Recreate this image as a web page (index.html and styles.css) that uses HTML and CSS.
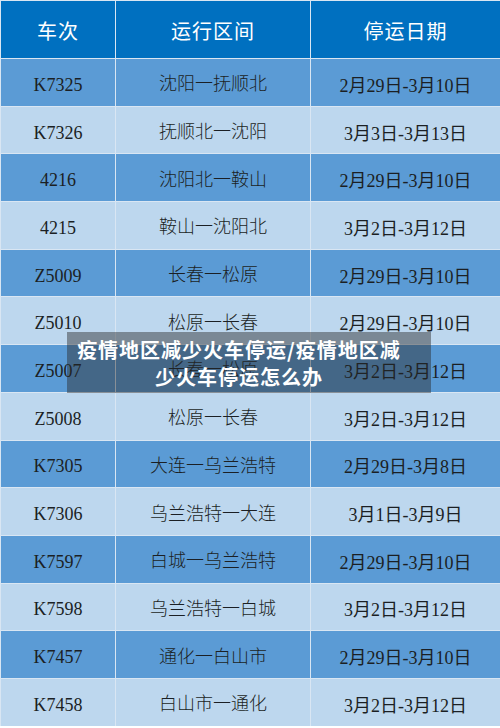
FILE: index.html
```html
<!DOCTYPE html>
<html lang="zh-CN">
<head>
<meta charset="utf-8">
<title>疫情地区减少火车停运</title>
<link rel="stylesheet" href="styles.css">
</head>
<body>
<div class="page">
  <div class="table">
    <div class="cell head">车次</div>
    <div class="cell head">运行区间</div>
    <div class="cell head">停运日期</div>

    <div class="cell dark num">K7325</div><div class="cell dark route">沈阳一抚顺北</div><div class="cell dark">2月29日-3月10日</div>
    <div class="cell light num">K7326</div><div class="cell light route">抚顺北一沈阳</div><div class="cell light">3月3日-3月13日</div>
    <div class="cell dark num">4216</div><div class="cell dark route">沈阳北一鞍山</div><div class="cell dark">2月29日-3月10日</div>
    <div class="cell light num">4215</div><div class="cell light route">鞍山一沈阳北</div><div class="cell light">3月2日-3月12日</div>
    <div class="cell dark num">Z5009</div><div class="cell dark route">长春一松原</div><div class="cell dark">2月29日-3月10日</div>
    <div class="cell light num">Z5010</div><div class="cell light route">松原一长春</div><div class="cell light">2月29日-3月10日</div>
    <div class="cell dark num">Z5007</div><div class="cell dark route">长春一松原</div><div class="cell dark">3月2日-3月12日</div>
    <div class="cell light num">Z5008</div><div class="cell light route">松原一长春</div><div class="cell light">3月2日-3月12日</div>
    <div class="cell dark num">K7305</div><div class="cell dark route">大连一乌兰浩特</div><div class="cell dark">2月29日-3月8日</div>
    <div class="cell light num">K7306</div><div class="cell light route">乌兰浩特一大连</div><div class="cell light">3月1日-3月9日</div>
    <div class="cell dark num">K7597</div><div class="cell dark route">白城一乌兰浩特</div><div class="cell dark">2月29日-3月10日</div>
    <div class="cell light num">K7598</div><div class="cell light route">乌兰浩特一白城</div><div class="cell light">3月2日-3月12日</div>
    <div class="cell dark num">K7457</div><div class="cell dark route">通化一白山市</div><div class="cell dark">2月29日-3月10日</div>
    <div class="cell light num">K7458</div><div class="cell light route">白山市一通化</div><div class="cell light">3月2日-3月12日</div>
  </div>
  <div class="caption">疫情地区减少火车停运/疫情地区减少火车停运怎么办</div>
</div>
</body>
</html>
```

FILE: styles.css
```css
html, body {
  margin: 0;
  padding: 0;
}
body {
  width: 500px;
  height: 728px;
  overflow: hidden;
  background: #ffffff;
}
.page {
  position: relative;
  width: 500px;
  height: 728px;
  overflow: hidden;
}
.table {
  display: grid;
  grid-template-columns: 114px 194px 1fr;
  grid-template-rows: 57px repeat(14, 46.7px);
  gap: 1px;
  padding: 1px 0 0 1px;
  background: #d9e6f3;
}
.cell {
  display: flex;
  align-items: center;
  justify-content: center;
  padding-top: 3px;
  font-family: "Liberation Serif", "Noto Sans CJK SC", serif;
  font-size: 18px;
  color: #1b1f24;
  white-space: nowrap;
}
.num {
  padding-top: 6px;
}
.route {
  font-family: "Noto Sans CJK SC", "Liberation Serif", serif;
  font-weight: 300;
  padding-top: 0;
}
.head {
  background: #0070c0;
  color: #ffffff;
  font-family: "Noto Sans CJK SC", sans-serif;
  font-size: 20px;
  letter-spacing: 1px;
  padding-top: 2px;
}
.dark {
  background: #5b9bd5;
}
.light {
  background: #bdd7ee;
}
.caption {
  position: absolute;
  left: 67px;
  top: 332px;
  width: 364px;
  box-sizing: border-box;
  padding: 4px 30px 3px 10px;
  background: rgba(40, 40, 40, 0.45);
  color: #ffffff;
  font-family: "Noto Sans CJK SC", sans-serif;
  font-weight: 700;
  font-size: 20px;
  line-height: 27px;
  letter-spacing: 1px;
  text-align: center;
}
```
